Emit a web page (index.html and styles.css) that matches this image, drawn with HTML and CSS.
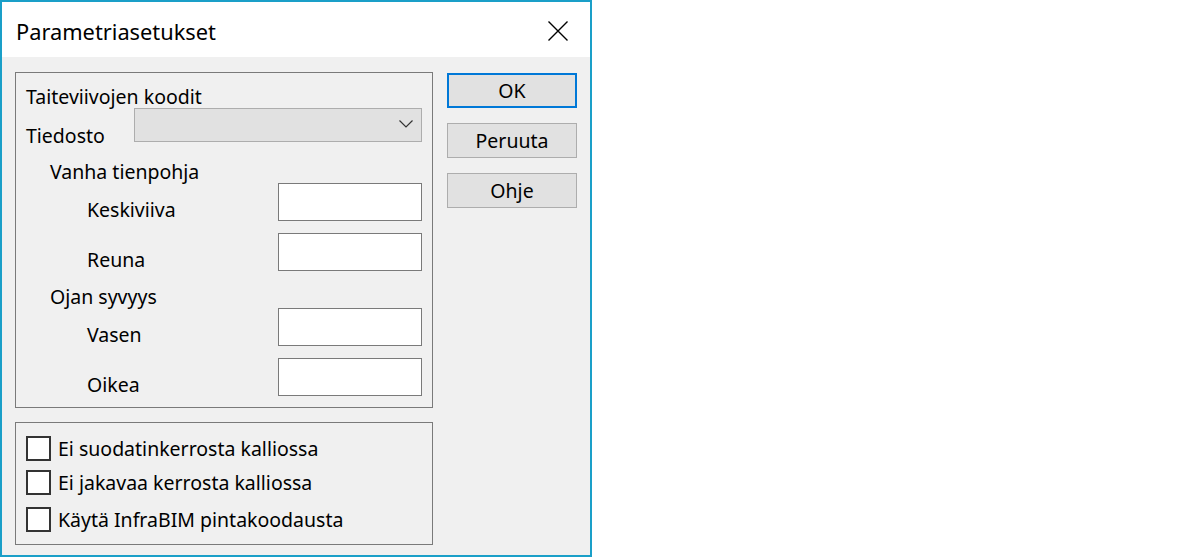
FILE: index.html
```html
<!DOCTYPE html>
<html lang="fi">
<head>
    <meta charset="UTF-8"/>
    <title>Parametriasetukset</title>
    <link rel="stylesheet" href="styles.css">
</head>
<body>
    <div class="window">
        <header class="titlebar">
            <span class="title">Parametriasetukset</span>
            <svg class="close" width="20" height="20" viewBox="0 0 20 20">
                <path d="M0.5 0.5 L19.5 19.5 M19.5 0.5 L0.5 19.5" stroke="#000" stroke-width="1.4" fill="none"/>
            </svg>
        </header>

        <div class="content">
            <div class="left">
                <fieldset class="group group-codes">
                    <div class="line heading">Taiteviivojen koodit</div>

                    <div class="row row-file">
                        <label class="lbl lbl-file">Tiedosto</label>
                        <div class="combo">
                            <svg width="14" height="8" viewBox="0 0 14 8">
                                <path d="M0.5 0.5 L7 7 L13.5 0.5" stroke="#333" stroke-width="1.2" fill="none"/>
                            </svg>
                        </div>
                    </div>

                    <div class="line sub sub-old">Vanha tienpohja</div>
                    <div class="row field first">
                        <label class="lbl">Keskiviiva</label>
                        <input class="edit" type="text">
                    </div>
                    <div class="row field">
                        <label class="lbl">Reuna</label>
                        <input class="edit" type="text">
                    </div>

                    <div class="line sub sub-ditch">Ojan syvyys</div>
                    <div class="row field first">
                        <label class="lbl">Vasen</label>
                        <input class="edit" type="text">
                    </div>
                    <div class="row field">
                        <label class="lbl">Oikea</label>
                        <input class="edit" type="text">
                    </div>
                </fieldset>

                <fieldset class="group group-checks">
                    <label class="check c1"><span class="box"></span>Ei suodatinkerrosta kalliossa</label>
                    <label class="check c2"><span class="box"></span>Ei jakavaa kerrosta kalliossa</label>
                    <label class="check c3"><span class="box"></span>Käytä InfraBIM pintakoodausta</label>
                </fieldset>
            </div>

            <div class="buttons">
                <button class="btn btn-default">OK</button>
                <button class="btn">Peruuta</button>
                <button class="btn">Ohje</button>
            </div>
        </div>
    </div>
</body>
</html>
```

FILE: styles.css
```css
* {
    margin: 0;
    padding: 0;
    box-sizing: border-box;
}

body {
    background: #fff;
    font-family: "Noto Sans", "Open Sans", sans-serif;
    font-size: 19.5px;
    color: #000;
}

.window {
    width: 592px;
    height: 557px;
    border: 2px solid #1a9fc8;
    background: #f0f0f0;
    display: flex;
    flex-direction: column;
}

.titlebar {
    height: 55px;
    background: #fff;
    display: flex;
    align-items: center;
    justify-content: space-between;
    padding: 0 22px 0 14px;
}

.title {
    font-size: 21.8px;
    line-height: 24px;
    margin-top: 4px;
}

.close {
    display: block;
    margin-top: 2px;
}

.content {
    display: flex;
    padding: 15px 0 0 13px;
    gap: 14px;
}

.left {
    display: flex;
    flex-direction: column;
    gap: 14px;
    width: 418px;
}

.group {
    border: 1px solid #7a7a7a;
    padding: 0 10px;
    display: flex;
    flex-direction: column;
}

.group-codes {
    height: 336px;
}

.line {
    line-height: 20px;
    height: 20px;
}

.heading {
    margin-top: 14px;
}

.row {
    display: flex;
    align-items: flex-start;
    justify-content: space-between;
}

.row-file {
    margin-top: 1px;
    height: 34px;
}

.lbl {
    line-height: 20px;
    height: 20px;
    margin-top: 18px;
}

.field .lbl {
    margin-top: 17px;
    padding-left: 61px;
}

.combo {
    width: 288px;
    height: 34px;
    background: #e1e1e1;
    border: 1px solid #adadad;
    display: flex;
    align-items: center;
    justify-content: flex-end;
    padding-right: 8px;
}

.combo svg {
    display: block;
    margin-top: -3px;
}

.sub {
    padding-left: 24px;
}

.sub-old {
    margin-top: 20px;
}

.sub-ditch {
    margin-top: 16px;
}

.field {
    margin-top: 12px;
    height: 38px;
}

.field.first {
    margin-top: 1px;
}

.edit {
    width: 144px;
    height: 38px;
    border: 1px solid #7a7a7a;
    background: #fff;
    outline: none;
}

.group-checks {
    height: 123px;
    padding-top: 13px;
}

.check {
    display: flex;
    align-items: center;
    gap: 7px;
    height: 25px;
    line-height: 20px;
}

.c2 {
    margin-top: 9px;
}

.c3 {
    margin-top: 12px;
}

.box {
    width: 25px;
    height: 25px;
    border: 2px solid #333;
    background: #fff;
}

.buttons {
    display: flex;
    flex-direction: column;
    gap: 15px;
    padding-top: 1px;
}

.btn {
    width: 130px;
    height: 35px;
    background: #e1e1e1;
    border: 1px solid #adadad;
    font-family: inherit;
    font-size: 19.5px;
    color: #000;
}

.btn-default {
    border: 2px solid #0078d7;
}
```
